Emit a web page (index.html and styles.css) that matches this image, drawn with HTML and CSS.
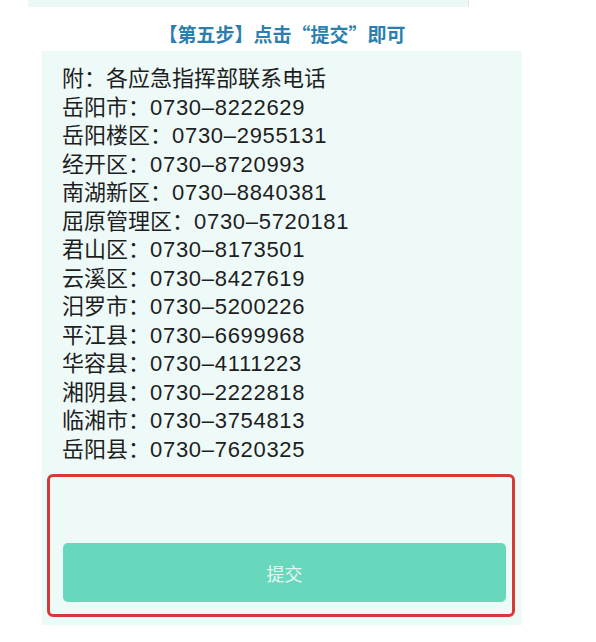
FILE: index.html
```html
<!DOCTYPE html>
<html lang="zh-CN">
<head>
    <meta charset="UTF-8">
    <meta name="viewport" content="width=device-width, initial-scale=1.0">
    <title>第五步</title>
    <link rel="stylesheet" href="styles.css">
</head>
<body>
    <div class="top-strip"></div>
    <div class="wrap">
        <h2 class="step-title">【第五步】点击“提交”即可</h2>
        <div class="panel">
            <div class="contacts">
                <div class="line">附：各应急指挥部联系电话</div>
                <div class="line">岳阳市：<span class="tel">0730–8222629</span></div>
                <div class="line">岳阳楼区：<span class="tel">0730–2955131</span></div>
                <div class="line">经开区：<span class="tel">0730–8720993</span></div>
                <div class="line">南湖新区：<span class="tel">0730–8840381</span></div>
                <div class="line">屈原管理区：<span class="tel">0730–5720181</span></div>
                <div class="line">君山区：<span class="tel">0730–8173501</span></div>
                <div class="line">云溪区：<span class="tel">0730–8427619</span></div>
                <div class="line">汨罗市：<span class="tel">0730–5200226</span></div>
                <div class="line">平江县：<span class="tel">0730–6699968</span></div>
                <div class="line">华容县：<span class="tel">0730–4111223</span></div>
                <div class="line">湘阴县：<span class="tel">0730–2222818</span></div>
                <div class="line">临湘市：<span class="tel">0730–3754813</span></div>
                <div class="line">岳阳县：<span class="tel">0730–7620325</span></div>
            </div>
            <div class="highlight">
                <button class="submit">提交</button>
            </div>
        </div>
    </div>
</body>
</html>
```

FILE: styles.css
```css
body {
    margin: 0;
    background: #fff;
    font-family: "Liberation Sans", "Noto Sans CJK SC", sans-serif;
}
.top-strip {
    margin-left: 28px;
    width: 440px;
    height: 7px;
    background: #eaf9f7;
    border-right: 1px solid #e3e6e6;
}
.wrap {
    margin-left: 42px;
    width: 480px;
}
.step-title {
    margin: 0;
    padding-top: 10px;
    height: 34px;
    line-height: 34px;
    text-align: center;
    font-family: "Noto Sans CJK SC", sans-serif;
    font-size: 19px;
    font-weight: bold;
    color: #2b7fae;
}
.panel {
    background: #eefaf8;
    padding: 14px 0 8px;
}
.contacts {
    padding: 0 20px;
}
.line {
    font-size: 22px;
    line-height: 28.5px;
    color: #1e1e1e;
    white-space: nowrap;
}
.tel {
    letter-spacing: 0.7px;
}
.highlight {
    margin: 10px 7px 0 5px;
    border: 3px solid #d63a35;
    border-radius: 6px;
    padding: 66px 6px 12px 13px;
    height: 59px;
}
.submit {
    display: block;
    width: 100%;
    height: 59px;
    border: none;
    border-radius: 5px;
    background: #67d8bc;
    color: #e6f7f1;
    font-family: "Noto Sans CJK SC", sans-serif;
    font-size: 18px;
}
```
